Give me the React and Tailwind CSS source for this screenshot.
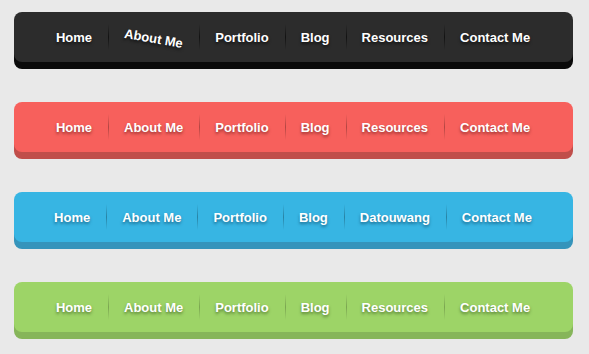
const items = ['Home', 'About Me', 'Portfolio', 'Blog', 'Resources', 'Contact Me'];

const bars = [
    { bg: 'bg-[#2c2c2c] shadow-[0_7px_0_#0a0a0a]', sep: 'bg-[linear-gradient(to_bottom,transparent,#121212,transparent)]', shadow: '[text-shadow:0_2px_3px_rgba(0,0,0,0.6)]', tilt: 1 },
    { bg: 'bg-[#f7605c] shadow-[0_7px_0_#c04e4a]', sep: 'bg-[linear-gradient(to_bottom,transparent,rgba(0,0,0,0.28),transparent)]', shadow: '[text-shadow:0_2px_3px_rgba(90,20,20,0.6)]' },
    { bg: 'bg-[#37b5e3] shadow-[0_7px_0_#3594bb]', sep: 'bg-[linear-gradient(to_bottom,transparent,rgba(0,0,0,0.28),transparent)]', shadow: '[text-shadow:0_2px_3px_rgba(10,60,90,0.6)]', swap: true },
    { bg: 'bg-[#9dd467] shadow-[0_7px_0_#86b55a]', sep: 'bg-[linear-gradient(to_bottom,transparent,rgba(0,0,0,0.22),transparent)]', shadow: '[text-shadow:0_2px_3px_rgba(40,70,20,0.6)]' },
];

function NavBar({ bar }) {
    const labels = bar.swap ? items.map((l) => (l === 'Resources' ? 'Datouwang' : l)) : items;
    return (
        <nav className={`w-[559px] h-[50px] rounded-[8px] flex items-center justify-center ${bar.bg}`}>
            {labels.map((label, i) => (
                <div key={label} className="flex items-center">
                    {i > 0 && <span className={`w-px h-[26px] ${bar.sep}`} />}
                    <a
                        href="#"
                        className={`pl-[15px] pr-4 text-[13px] font-bold text-white leading-none ${bar.shadow} ${bar.tilt && i === 1 ? 'inline-block rotate-[10deg] translate-y-[1px]' : ''}`}
                    >
                        {label}
                    </a>
                </div>
            ))}
        </nav>
    );
}

export default function App() {
    return (
        <div className="min-h-screen bg-[#e9e9e9] pt-[12px] pl-[14px] flex flex-col gap-[40px]" style={{ fontFamily: '"Liberation Sans", Arial, sans-serif' }}>
            {bars.map((bar, i) => (
                <NavBar key={i} bar={bar} />
            ))}
        </div>
    );
}
